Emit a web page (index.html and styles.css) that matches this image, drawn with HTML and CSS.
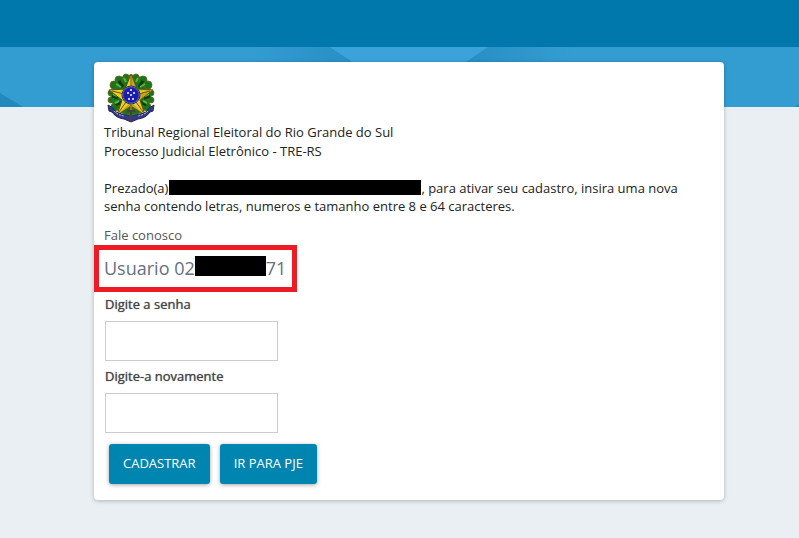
FILE: index.html
```html
<!DOCTYPE html>
<html lang="pt-BR">
<head>
<meta charset="utf-8">
<meta name="viewport" content="width=device-width, initial-scale=1">
<title>Processo Judicial Eletrônico</title>
<link rel="stylesheet" href="styles.css">
</head>
<body>
<header class="topbar"></header>
<div class="banner">
<svg class="banner-art" viewBox="0 0 799 60" preserveAspectRatio="none" aria-hidden="true">
<defs>
<linearGradient id="fadeLeft" x1="0" x2="1"><stop offset="0" stop-color="#1c82b8" stop-opacity="0"/><stop offset="1" stop-color="#1c82b8" stop-opacity=".5"/></linearGradient>
<linearGradient id="fadeRight" x1="1" x2="0"><stop offset="0" stop-color="#1c82b8" stop-opacity="0"/><stop offset="1" stop-color="#1c82b8" stop-opacity=".5"/></linearGradient>
</defs>
<path fill="url(#fadeLeft)" d="M250 0h80l24 16H250z"/>
<path fill="url(#fadeRight)" d="M488 0h82v16H464z"/>
<path fill="#3ba3d9" d="M330 0h158l-24 16H354z"/>
<path fill="#2488bd" d="M0 46l23 14H0zM799 57l-4 3h4z"/>
</svg>
</div>
<div class="page">
<main class="card">
<svg class="emblem" viewBox="0 0 48 50" role="img" aria-label="Brasão da República">
<g fill="#17751b" stroke="#69651c" stroke-width=".8">
<ellipse cx="24" cy="22" rx="20" ry="20"/>
<circle cx="19" cy="4" r="3"/><circle cx="29" cy="4" r="3"/><circle cx="12" cy="7" r="4"/><circle cx="36" cy="7" r="4"/>
<circle cx="7" cy="12" r="4"/><circle cx="41" cy="12" r="4"/><circle cx="4" cy="20" r="3"/><circle cx="44" cy="20" r="3"/>
<circle cx="4" cy="27" r="3"/><circle cx="44" cy="27" r="3"/><circle cx="8" cy="34" r="4"/><circle cx="40" cy="34" r="4"/>
</g>
<path d="M12 8l4 6M36 8l-4 6M5 23l6 2M43 23l-6 2M9 32l5-3M39 32l-5-3" stroke="#0a3d14" stroke-width="3"/>
<path d="M9 11l5 3M38 11l-5 3M6 21l4 2M42 21l-4 2M8 30l4-2M40 30l-4-2M17 5l2 4M31 5l-2 4" stroke="#58b83a" stroke-width="2"/>
<path d="M24 1l6 15 16 1-13 10 5 15-14-9-14 9 5-15L2 17l16-1z" fill="#edcf22" stroke="#5d4c11"/>
<path d="M24 1l2 17 20-1-16 4 8 21-14-13-14 13 14-9 14 9-5-15 13-10-16-1z" fill="#a27e13" opacity=".5"/>
<path d="M24 4v11M5 18l12 3M43 18l-12 3M12 39l7-10M36 39l-7-10" stroke="#625416"/>
<circle cx="24" cy="22" r="9" fill="#c5c7cf" stroke="#292861"/>
<circle cx="24" cy="22" r="8" fill="#1c1dae" stroke="#4145a8"/>
<path d="M23 16h2v2h-2zM20 19h2v2h-2zM26 19h2v2h-2zM23 21h2v2h-2zM21 25h2v2h-2zM25 25h2v2h-2z" fill="#b8c5ff"/>
<path d="M1 32l5 3q2 5 9 6l9 2 9-2q7-1 9-6l5-3-1 6-3 1q-4 6-12 7l-7 3-7-3q-8-1-12-7l-3-1z" fill="#30398a" stroke="#252852"/>
<path d="M7 38q4 4 10 5M41 38q-4 4-10 5" fill="none" stroke="#c4c6df" stroke-dasharray="2 1"/>
<path d="M24 32v17M20 38h8" stroke="#4b4034" stroke-width="2"/>
<path d="M24 32v5" stroke="#c4a63c"/>
</svg>
<p class="court">Tribunal Regional Eleitoral do Rio Grande do Sul<br>Processo Judicial Eletrônico - TRE-RS</p>
<p class="message">Prezado(a)<span class="redacted redacted-name"></span>, para ativar seu cadastro, insira uma nova senha contendo letras, numeros e tamanho entre 8 e 64 caracteres.</p>
<a class="contact" href="#">Fale conosco</a>
<h1 class="user">Usuario 02<span class="redacted redacted-id"></span>71</h1>
<form class="form">
<label for="senha">Digite a senha</label>
<input id="senha" type="password">
<label for="confirma">Digite-a novamente</label>
<input id="confirma" type="password">
<div class="actions">
<button type="submit">CADASTRAR</button>
<button type="button">IR PARA PJE</button>
</div>
</form>
</main>
</div>
</body>
</html>
```
FILE: styles.css
```css
* { box-sizing: border-box; }
body {
  margin: 0;
  background: #e9eff2;
  color: #222;
  font: 13px/19px "Open Sans", sans-serif;
}
.topbar { height: 47px; background: #0078ab; }
.banner { height: 60px; background: #339cd1; }
.banner-art { display: block; width: 100%; height: 100%; }
.page { padding: 0 13px 0 32px; }
.card {
  position: relative;
  max-width: 630px;
  margin: -45px auto 38px;
  padding: 11px 10px 16px;
  background: #fff;
  border-radius: 4px;
  box-shadow: 0 1px 4px rgba(0, 0, 0, .25);
}
.emblem { display: block; width: 48px; height: 50px; margin-left: 3px; }
p { margin: 0; }
.message { margin-top: 18px; line-height: 18px; }
.redacted { display: inline-block; background: #000; }
.redacted-name { width: 252px; height: 15px; margin-left: 1px; vertical-align: -2px; }
.redacted-id { width: 71px; height: 20px; vertical-align: -1px; }
.contact { display: block; width: max-content; margin-top: 11px; color: #555; text-decoration: none; }
.user {
  width: max-content;
  margin: 0 0 0 -10px;
  padding: 5px 6px 5px 5px;
  border: 5px solid #ed1c24;
  color: #667080;
  font-size: 18px;
  font-weight: 400;
  line-height: 27px;
}
.form { display: flex; flex-direction: column; align-items: flex-start; padding-left: 1px; }
label { margin: 3px 0 7px; color: #444; text-shadow: 0 0 1px #666; }
input {
  width: 173px;
  height: 40px;
  margin-bottom: 3px;
  padding: 8px;
  border: 1px solid #ccc;
  background: #fff;
  font: inherit;
}
.actions { display: flex; gap: 10px; margin: 8px 4px 0; }
button {
  height: 40px;
  padding: 0 14px 2px;
  border: 0;
  border-radius: 3px;
  background: #0085b0;
  color: #fff;
  font: inherit;
  box-shadow: 0 1px 4px rgba(0, 0, 0, .35);
}
```
